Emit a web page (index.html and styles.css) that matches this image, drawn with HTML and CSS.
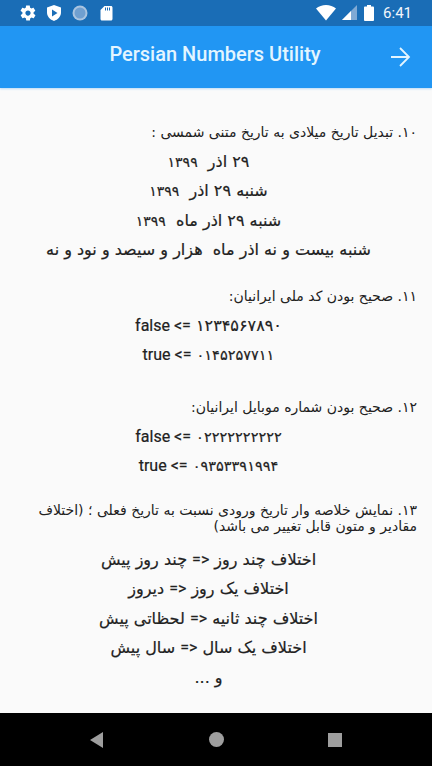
FILE: index.html
```html
<!DOCTYPE html>
<html lang="fa">
<head>
    <meta charset="utf-8">
    <title>Persian Numbers Utility</title>
    <link rel="stylesheet" href="styles.css">
</head>
<body>
    <div class="status-bar">
        <div class="status-left">
            <svg width="18" height="18" viewBox="0 0 24 24"><path fill="#fff" d="M19.4 13c0-.3.1-.6.1-1s0-.7-.1-1l2.100-1.600c.2-.2.2-.4.1-.6l-2-3.500c-.1-.2-.4-.3-.6-.2l-2.500 1c-.5-.4-1.100-.7-1.700-1l-.4-2.600c0-.3-.2-.5-.5-.5h-4c-.3 0-.5.2-.5.400l-.4 2.700c-.6.2-1.200.6-1.700 1l-2.500-1c-.2-.1-.5 0-.6.2l-2 3.500c-.1.2-.1.4.1.6L4.600 11c0 .3-.1.7-.1 1s0 .7.1 1l-2.100 1.600c-.2.2-.2.4-.1.6l2 3.500c.1.2.4.3.6.2l2.500-1c.5.4 1.100.7 1.700 1l.4 2.600c0 .3.2.5.5.5h4c.3 0 .5-.2.5-.4l.4-2.700c.6-.2 1.200-.6 1.700-1l2.500 1c.2.1.5 0 .6-.2l2-3.500c.1-.2.1-.4-.1-.6L19.400 13zM12 15.500c-1.900 0-3.500-1.600-3.500-3.500s1.600-3.500 3.500-3.500 3.500 1.600 3.500 3.500-1.600 3.500-3.500 3.500z"/></svg>
            <svg width="18" height="18" viewBox="0 0 18 18"><path fill="#fff" fill-rule="evenodd" d="M9 1l7 2.600v5c0 4-3 7.200-7 8.400-4-1.200-7-4.400-7-8.400v-5L9 1zM7 5.600v6.800L12.500 9 7 5.600z"/></svg>
            <svg width="18" height="18" viewBox="0 0 18 18"><circle cx="9" cy="9" r="7.500" fill="#a9c4e0"/><circle cx="9" cy="9" r="5.500" fill="#6f9fd0"/></svg>
            <svg width="18" height="18" viewBox="0 0 18 18"><path fill="#fff" fill-rule="evenodd" d="M7.500 2H14c.8 0 1.500.7 1.500 1.500v11.500c0 .8-.7 1.500-1.500 1.500H5c-.8 0-1.500-.7-1.500-1.500V6l4-4zM8 3.500v3h1v-3H8zm2 0v3h1v-3h-1zm2 0v3h1v-3h-1z"/></svg>
        </div>
        <div class="status-right">
            <svg width="20" height="16" viewBox="0 0 20 16"><path fill="#fff" d="M10 15.500L0 3.500C2.800 1.300 6.200 0 10 0s7.200 1.300 10 3.500L10 15.500z"/></svg>
            <svg width="16" height="16" viewBox="0 0 16 16"><path fill="#7fa9d4" d="M15 0v15H0z"/><path fill="#fff" d="M9 6v9H0z"/></svg>
            <svg width="10" height="16" viewBox="0 0 10 16"><path fill="#fff" d="M3 0h4v1.500h2c.5 0 1 .5 1 1V15c0 .5-.5 1-1 1H1c-.5 0-1-.5-1-1V2.500c0-.5.5-1 1-1h2z"/></svg>
            <span class="clock">6:41</span>
        </div>
    </div>

    <div class="app-bar">
        <span class="app-title">Persian Numbers Utility</span>
        <svg class="app-arrow" width="24" height="24" viewBox="0 0 24 24"><path fill="none" stroke="currentColor" stroke-width="1.800" d="M3 12h17.500M12 3l9 9-9 9"/></svg>
    </div>

    <div class="content" dir="rtl">
        <section class="gap-a">
            <p class="heading">۱۰. تبدیل تاریخ میلادی به تاریخ متنی شمسی :</p>
            <p class="line">۲۹ اذر&nbsp; <span class="year">۱۳۹۹</span></p>
            <p class="line">شنبه ۲۹ اذر&nbsp; <span class="year">۱۳۹۹</span></p>
            <p class="line">شنبه ۲۹ اذر ماه&nbsp; <span class="year">۱۳۹۹</span></p>
            <p class="line">شنبه بیست و نه اذر ماه&nbsp; هزار و سیصد و نود و نه</p>
        </section>
        <section class="gap-b">
            <p class="heading">۱۱. صحیح بودن کد ملی ایرانیان:</p>
            <p class="line">۱۲۳۴۵۶۷۸۹۰ <span class="latin">=&gt; false</span></p>
            <p class="line"><span class="num">۰۱۴۵۲۵۷۷۱۱</span> <span class="latin">=&gt; true</span></p>
        </section>
        <section class="gap-c">
            <p class="heading">۱۲. صحیح بودن شماره موبایل ایرانیان:</p>
            <p class="line"><span class="num">۰۲۲۲۲۲۲۲۲۲۲</span> <span class="latin">=&gt; false</span></p>
            <p class="line"><span class="num">۰۹۳۵۳۳۹۱۹۹۴</span> <span class="latin">=&gt; true</span></p>
        </section>
        <section>
            <p class="heading long">۱۳. نمایش خلاصه وار تاریخ ورودی نسبت به تاریخ فعلی ؛ (اختلاف مقادیر و متون قابل تغییر می باشد)</p>
            <p class="line">اختلاف چند روز <span class="latin">&lt;=</span> چند روز پیش</p>
            <p class="line">اختلاف یک روز <span class="latin">&lt;=</span> دیروز</p>
            <p class="line">اختلاف چند ثانیه <span class="latin">&lt;=</span> لحظاتی پیش</p>
            <p class="line">اختلاف یک سال <span class="latin">&lt;=</span> سال پیش</p>
            <p class="line">و ...</p>
        </section>
    </div>

    <div class="nav-bar">
        <svg width="14" height="16" viewBox="0 0 14 16"><path fill="#9e9e9e" d="M13 0v16L0 8z"/></svg>
        <span class="nav-home"></span>
        <span class="nav-square"></span>
    </div>
</body>
</html>
```
FILE: styles.css
```css
html, body {
    margin: 0;
    height: 766px;
    overflow: hidden;
}
body {
    display: flex;
    flex-direction: column;
    font-family: "DejaVu Sans", sans-serif;
    background-color: #fafafa;
    color: #212121;
}
.status-bar {
    display: flex;
    justify-content: space-between;
    align-items: center;
    height: 26px;
    padding: 0 20px 0 19px;
    background-color: #1a6db6;
}
.status-left {
    display: flex;
    align-items: center;
    gap: 8px;
}
.status-right {
    display: flex;
    align-items: center;
    gap: 6px;
}
.clock {
    margin-left: 3px;
    font-family: Roboto, sans-serif;
    font-size: 15px;
    color: #f2f6fb;
}
.app-bar {
    display: flex;
    justify-content: center;
    align-items: center;
    position: relative;
    height: 62px;
    background-color: #2196f3;
    color: #e3f5ff;
    box-shadow: 0 1px 2px rgba(33, 150, 243, 0.3);
}
.app-title {
    margin: 0 2px 6px 0;
    font-family: Roboto, sans-serif;
    font-size: 20px;
    font-weight: 500;
}
.app-arrow {
    position: absolute;
    right: 20px;
    top: 19px;
}
.content {
    flex: 1;
    padding: 36px 15px 0 0;
}
.content p {
    margin: 0;
}
.gap-a {
    margin-bottom: 30px;
}
.gap-b {
    margin-bottom: 36px;
}
.gap-c {
    margin-bottom: 28px;
}
.content .heading {
    margin-bottom: -1px;
    padding-left: 38px;
    font-size: 14px;
    line-height: 17px;
}
.content .heading.long {
    margin-bottom: 16.5px;
    line-height: 16px;
}
.content .line {
    height: 17px;
    margin-top: 12.5px;
    font-size: 16px;
    line-height: 17px;
    text-align: center;
    -webkit-text-stroke: 0.2px #212121;
}
.latin {
    font-family: Roboto, sans-serif;
}
.year {
    font-size: 14px;
    line-height: 1;
}
.num {
    font-size: 14.5px;
    line-height: 1;
}
.nav-bar {
    display: flex;
    justify-content: space-between;
    align-items: center;
    height: 53px;
    padding: 0 90px;
    background-color: #000;
}
.nav-home {
    width: 15px;
    height: 15px;
    border-radius: 50%;
    background-color: #9e9e9e;
}
.nav-square {
    width: 14px;
    height: 14px;
    background-color: #9e9e9e;
}
```
